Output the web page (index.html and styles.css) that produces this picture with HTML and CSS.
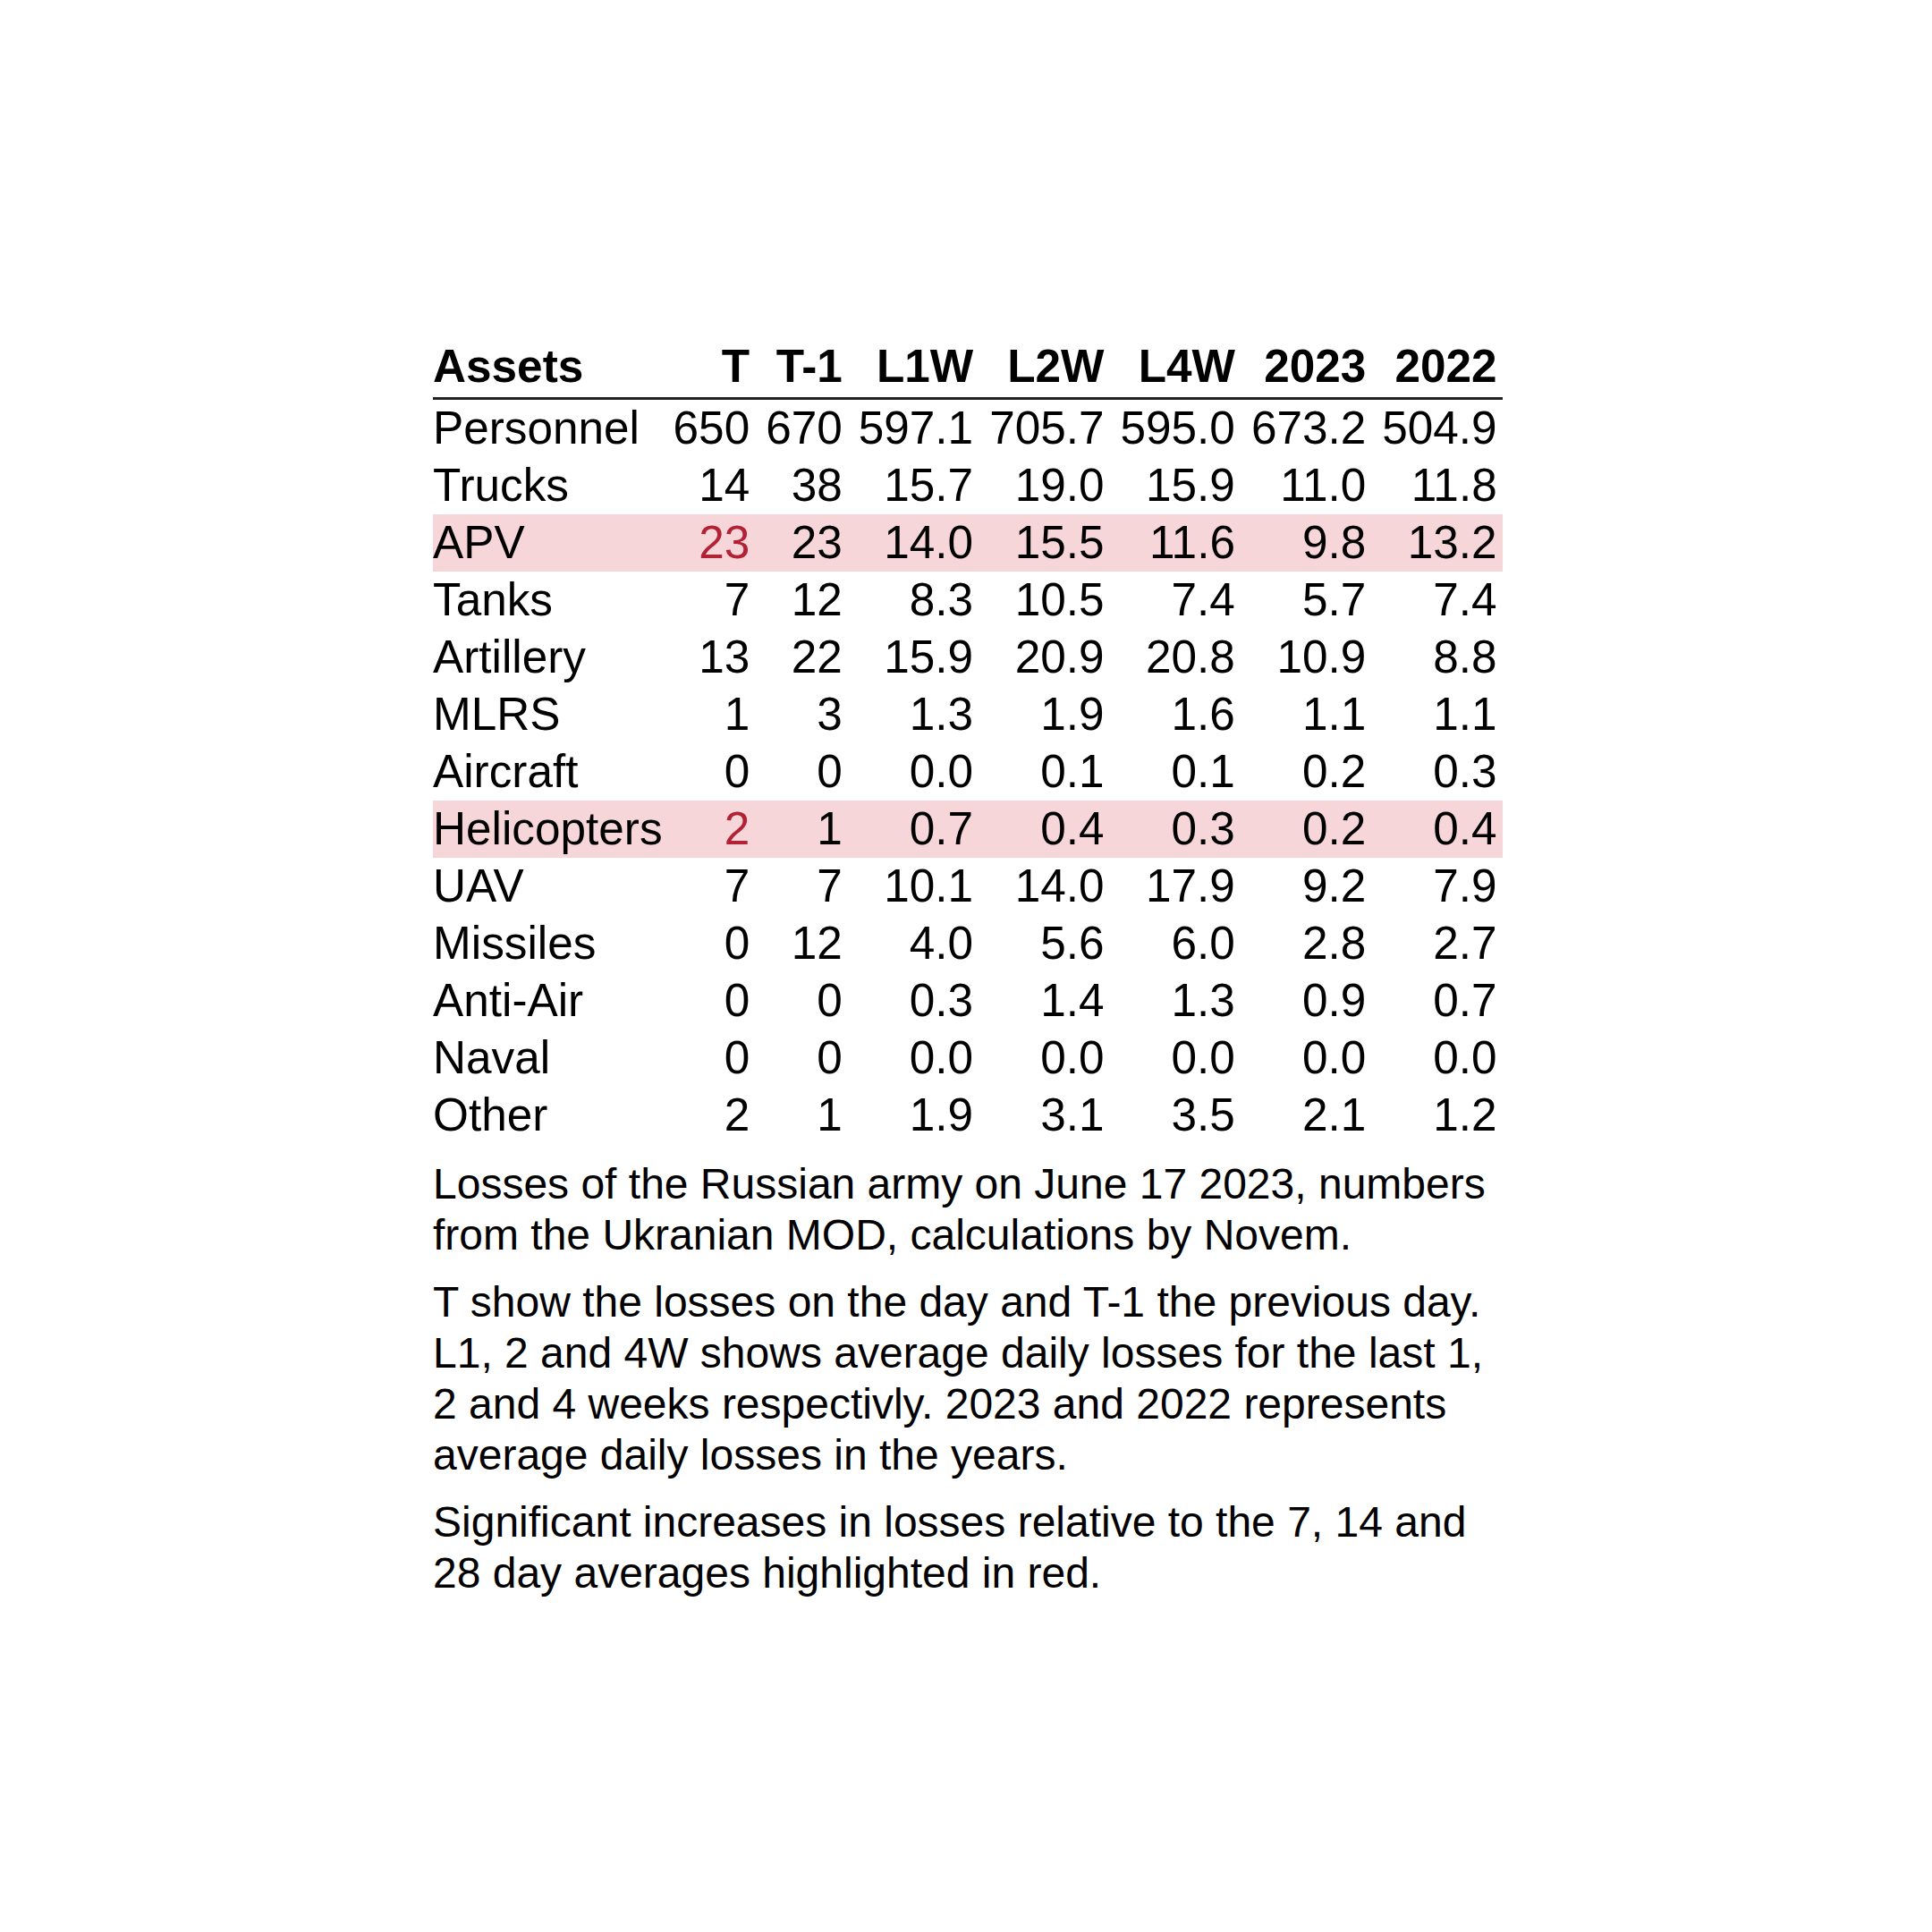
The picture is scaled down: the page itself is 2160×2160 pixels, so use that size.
FILE: index.html
```html
<!DOCTYPE html>
<html lang="en">
<head>
<meta charset="utf-8">
<title>Losses of the Russian army</title>
<link rel="stylesheet" href="styles.css">
</head>
<body>
<div class="page">
  <table class="losses">
    <thead>
      <tr>
        <th class="label">Assets</th>
        <th>T</th>
        <th>T-1</th>
        <th>L1W</th>
        <th>L2W</th>
        <th>L4W</th>
        <th>2023</th>
        <th>2022</th>
      </tr>
    </thead>
    <tbody>
      <tr><td class="label">Personnel</td><td>650</td><td>670</td><td>597.1</td><td>705.7</td><td>595.0</td><td>673.2</td><td>504.9</td></tr>
      <tr><td class="label">Trucks</td><td>14</td><td>38</td><td>15.7</td><td>19.0</td><td>15.9</td><td>11.0</td><td>11.8</td></tr>
      <tr class="hl"><td class="label">APV</td><td class="up">23</td><td>23</td><td>14.0</td><td>15.5</td><td>11.6</td><td>9.8</td><td>13.2</td></tr>
      <tr><td class="label">Tanks</td><td>7</td><td>12</td><td>8.3</td><td>10.5</td><td>7.4</td><td>5.7</td><td>7.4</td></tr>
      <tr><td class="label">Artillery</td><td>13</td><td>22</td><td>15.9</td><td>20.9</td><td>20.8</td><td>10.9</td><td>8.8</td></tr>
      <tr><td class="label">MLRS</td><td>1</td><td>3</td><td>1.3</td><td>1.9</td><td>1.6</td><td>1.1</td><td>1.1</td></tr>
      <tr><td class="label">Aircraft</td><td>0</td><td>0</td><td>0.0</td><td>0.1</td><td>0.1</td><td>0.2</td><td>0.3</td></tr>
      <tr class="hl"><td class="label">Helicopters</td><td class="up">2</td><td>1</td><td>0.7</td><td>0.4</td><td>0.3</td><td>0.2</td><td>0.4</td></tr>
      <tr><td class="label">UAV</td><td>7</td><td>7</td><td>10.1</td><td>14.0</td><td>17.9</td><td>9.2</td><td>7.9</td></tr>
      <tr><td class="label">Missiles</td><td>0</td><td>12</td><td>4.0</td><td>5.6</td><td>6.0</td><td>2.8</td><td>2.7</td></tr>
      <tr><td class="label">Anti-Air</td><td>0</td><td>0</td><td>0.3</td><td>1.4</td><td>1.3</td><td>0.9</td><td>0.7</td></tr>
      <tr><td class="label">Naval</td><td>0</td><td>0</td><td>0.0</td><td>0.0</td><td>0.0</td><td>0.0</td><td>0.0</td></tr>
      <tr><td class="label">Other</td><td>2</td><td>1</td><td>1.9</td><td>3.1</td><td>3.5</td><td>2.1</td><td>1.2</td></tr>
    </tbody>
  </table>
  <div class="notes">
    <p>Losses of the Russian army on June 17 2023, numbers from the Ukranian MOD, calculations by Novem.</p>
    <p>T show the losses on the day and T-1 the previous day. L1, 2 and 4W shows average daily losses for the last 1, 2 and 4 weeks respectivly. 2023 and 2022 represents average daily losses in the years.</p>
    <p>Significant increases in losses relative to the 7, 14 and 28 day averages highlighted in red.</p>
  </div>
</div>
</body>
</html>
```

FILE: styles.css
```css
html, body {
  margin: 0;
  padding: 0;
  background: #ffffff;
}

body {
  width: 2160px;
  height: 2160px;
  font-family: "Liberation Sans", Arial, sans-serif;
  color: #000000;
}

.page {
  padding: 378px 0 0 484px;
  width: 1196px;
}

.losses {
  border-collapse: collapse;
  border-spacing: 0;
  font-size: 51.3px;
}

.losses th,
.losses td {
  padding: 0 6px 0 12px;
  line-height: 64px;
  text-align: right;
  white-space: nowrap;
  font-weight: normal;
}

.losses th {
  font-weight: bold;
  padding-bottom: 2px;
  border-bottom: 3px solid #222222;
}

.losses .label {
  text-align: left;
  padding-left: 0;
  padding-right: 0;
}

.losses tr.hl td {
  background: #f7d6da;
}

.losses td.up {
  color: #b22234;
}

.notes {
  width: 1196px;
  font-size: 48px;
  line-height: 57px;
  padding-top: 16px;
}

.notes p {
  margin: 0;
}

.notes p + p {
  margin-top: 18px;
}
```
